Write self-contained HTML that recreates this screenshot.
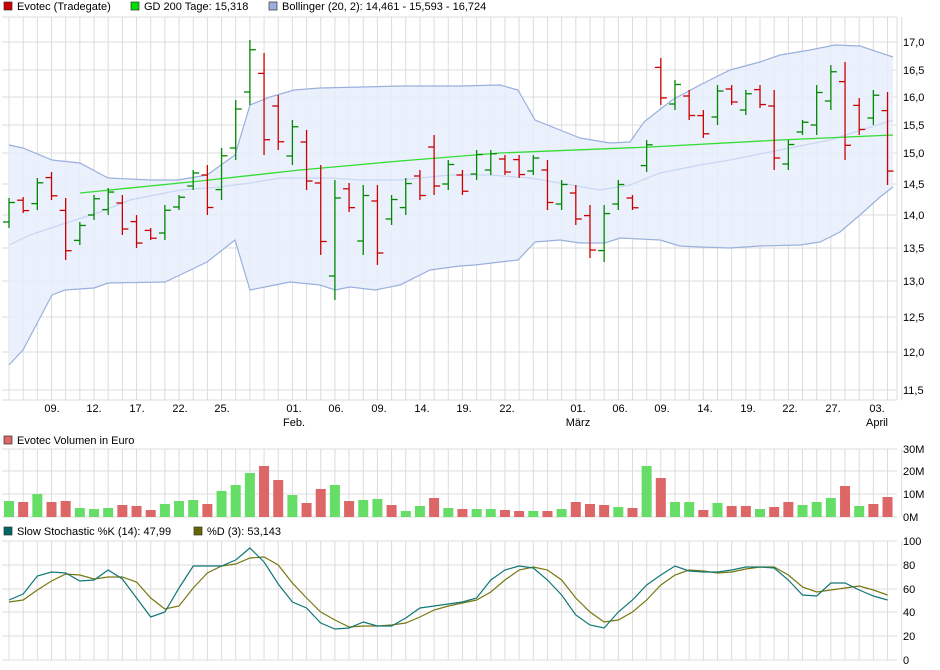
<!DOCTYPE html>
<html><head><meta charset="utf-8">
<style>
body{margin:0;background:#fff;width:940px;height:670px;overflow:hidden;font-family:"Liberation Sans",sans-serif;}
svg{position:absolute;left:0;top:0}
text{font-family:"Liberation Sans",sans-serif;font-size:11px;fill:#000}
</style></head><body>
<svg id="s" width="940" height="670" xmlns="http://www.w3.org/2000/svg"></svg>
<script>
const S=document.getElementById('s');let h='';
const X=i=>9+i*14.17;
const gridX=[];for(let i=0;i<64;i++)gridX.push(X(i));
function vgrid(t,b){gridX.forEach(x=>h+=`<line x1="${x}" y1="${t}" x2="${x}" y2="${b}" stroke="#dcdcdc"/>`);}
function hgrid(ys){ys.forEach(y=>h+=`<line x1="2" y1="${y}" x2="897" y2="${y}" stroke="#dcdcdc"/>`);}
function pl(pts,c,w){h+=`<polyline fill="none" stroke="${c}" stroke-width="${w}" points="${pts.map(p=>p.join(',')).join(' ')}"/>`;}
function legend(x,y,c,t){h+=`<rect x="${x}" y="${y-8}" width="8" height="8" fill="${c}" stroke="#333" stroke-width="0.7"/><text x="${x+13}" y="${y}">${t}</text>`;}
// legends
legend(4,10,'#cc0000','Evotec (Tradegate)');legend(131,10,'#00dd00','GD 200 Tage: 15,318');legend(269,10,'#9ab0dd','Bollinger (20, 2): 14,461 - 15,593 - 16,724');
legend(4,444,'#dd6666','Evotec Volumen in Euro');
legend(4,535,'#006666','Slow Stochastic %K (14): 47,99');legend(194,535,'#666600','%D (3): 53,143');
// main panel
const my=[42,70,97,125,153,184,215,248,281,317,352,390];
vgrid(17,400);hgrid(my);
h+=`<line x1="2" y1="17" x2="897" y2="17" stroke="#dcdcdc"/><line x1="2" y1="400" x2="897" y2="400" stroke="#dcdcdc"/><line x1="897" y1="17" x2="897" y2="400" stroke="#dcdcdc"/>`;
const up=[[9,145],[23,148],[52,160],[80,163],[108,178],[150,180],[178,180],[207,175],[235,155],[250,105],[270,97],[294,90],[320,88],[362,87],[400,86],[460,86],[500,85],[518,90],[535,120],[560,130],[580,138],[610,143],[630,142],[644,122],[672,100],[700,85],[730,70],[760,62],[780,55],[810,50],[835,45],[860,46],[893,57]];
const lo=[[9,365],[23,350],[52,295],[65,290],[94,288],[108,283],[165,282],[180,275],[207,262],[235,240],[250,290],[265,287],[290,282],[320,285],[335,290],[350,287],[375,290],[400,285],[430,270],[460,266],[475,265],[500,262],[518,260],[535,242],[560,240],[580,243],[605,243],[620,238],[660,240],[680,246],[700,247],[730,248],[760,246],[800,245],[820,242],[840,232],[860,215],[880,197],[893,187]];
h+=`<polygon fill="#e6eefc" fill-opacity="0.85" points="${up.concat(lo.slice().reverse()).map(p=>p.join(',')).join(' ')}"/>`;
pl(up,'#9ab0dd',1.2);pl(lo,'#9ab0dd',1.2);
pl([[9,245],[30,235],[60,225],[100,212],[130,200],[180,190],[220,187],[250,183],[280,178],[330,178],[360,180],[400,180],[450,175],[490,175],[530,178],[560,183],[600,190],[630,185],[660,173],[700,165],[730,160],[780,150],[830,140],[893,120]],'#c8d6f4',1.2);
pl([[80,193],[200,181],[300,170],[400,161],[500,153],[650,147],[780,140],[893,135]],'#33dd33',1.3);
// OHLC bars: [hi,lo,g]
const B=[[198,228,1],[197,213,0],[178,210,1],[172,200,0],[198,260,0],[222,245,1],[195,220,1],[188,215,1],[195,235,0],[215,248,0],[228,240,0],[205,240,1],[195,210,1],[170,190,1],[165,215,0],[148,200,1],[100,160,1],[40,105,1],[53,155,0],[95,150,0],[120,165,1],[130,190,0],[165,255,0],[180,300,1],[183,212,0],[185,255,1],[185,265,0],[195,225,1],[178,215,1],[170,200,0],[135,195,0],[160,190,1],[170,195,0],[150,180,1],[150,175,1],[155,175,0],[155,178,0],[155,175,1],[160,210,0],[180,210,1],[185,225,0],[205,258,0],[205,262,1],[180,210,1],[195,210,0],[140,172,1],[58,105,0],[80,110,1],[90,120,0],[110,138,0],[85,125,1],[85,105,0],[90,115,1],[85,108,0],[90,170,0],[140,170,1],[120,135,1],[85,135,1],[65,110,1],[62,160,0],[98,135,0],[90,125,1],[92,185,0]];
B.forEach((b,i)=>{const x=X(i),c=b[2]?'#008800':'#cc0000';const o=b[2]?b[1]-(b[1]-b[0])*0.2:b[0]+(b[1]-b[0])*0.2,cl=b[2]?b[0]+(b[1]-b[0])*0.15:b[1]-(b[1]-b[0])*0.15;
h+=`<line x1="${x}" y1="${b[0]}" x2="${x}" y2="${b[1]}" stroke="${c}" stroke-width="1.3"/><line x1="${x-6}" y1="${o}" x2="${x}" y2="${o}" stroke="${c}" stroke-width="1.3"/><line x1="${x}" y1="${cl}" x2="${x+6}" y2="${cl}" stroke="${c}" stroke-width="1.3"/>`;});
const ml=['17,0','16,5','16,0','15,5','15,0','14,5','14,0','13,5','13,0','12,5','12,0','11,5'];
ml.forEach((t,k)=>h+=`<text x="903" y="${my[k]+4}">${t}</text>`);
const xl=[[52,'09.'],[94,'12.'],[137,'17.'],[180,'22.'],[222,'25.'],[294,'01.'],[336,'06.'],[379,'09.'],[422,'14.'],[464,'19.'],[507,'22.'],[578,'01.'],[620,'06.'],[662,'09.'],[705,'14.'],[748,'19.'],[790,'22.'],[833,'27.'],[877,'03.']];
xl.forEach(a=>h+=`<text x="${a[0]}" y="412" text-anchor="middle">${a[1]}</text>`);
[[294,'Feb.'],[578,'März'],[877,'April']].forEach(a=>h+=`<text x="${a[0]}" y="426" text-anchor="middle">${a[1]}</text>`);
// volume
vgrid(449,517);hgrid([449,471,494,517]);
const V=[[501,1],[502,0],[494,1],[502,0],[501,0],[508,1],[509,1],[508,1],[505,0],[506,0],[510,0],[504,1],[501,1],[500,1],[504,0],[491,1],[485,1],[473,1],[466,0],[480,0],[495,1],[503,0],[489,0],[485,1],[501,0],[500,1],[499,1],[505,0],[511,1],[506,1],[498,0],[508,1],[509,0],[509,1],[509,1],[510,0],[511,0],[511,1],[511,0],[509,1],[502,0],[504,0],[505,0],[507,1],[508,0],[466,1],[478,0],[502,1],[502,1],[510,0],[503,1],[506,0],[506,0],[509,1],[507,0],[502,0],[505,1],[502,1],[498,1],[486,0],[506,1],[504,0],[497,0]];
V.forEach((v,i)=>{const x=X(i);h+=`<rect x="${x-5}" y="${v[0]}" width="10" height="${517-v[0]}" fill="${v[1]?'#66dd66':'#dd6666'}"/>`;});
[['30M',449],['20M',471],['10M',494],['0M',517]].forEach(a=>h+=`<text x="903" y="${a[1]+4}">${a[0]}</text>`);
// stochastic
vgrid(541,660);hgrid([541,565,589,612,636,660]);
const K=[600,594,576,572,573,581,580,570,579,598,617,612,588,566,566,566,560,548,562,584,602,608,623,629,628,622,626,626,618,608,606,604,602,598,580,570,566,568,580,595,615,625,628,612,600,585,575,566,571,572,572,570,567,567,568,580,595,596,583,583,590,596,600,603];
const D=[602,600,590,581,574,575,579,577,577,582,598,609,606,588,573,566,564,558,557,565,583,598,612,620,627,626,626,625,623,617,610,606,603,600,592,580,570,567,570,580,598,612,622,620,612,600,585,575,570,571,573,572,569,567,567,575,587,592,590,588,586,590,595,598];
pl(D.map((y,i)=>[X(i),y]).slice(0,63),'#777711',1.2);pl(K.map((y,i)=>[X(i),y]).slice(0,63),'#117777',1.2);
[['100',541],['80',565],['60',589],['40',612],['20',636],['0',660]].forEach(a=>h+=`<text x="903" y="${a[1]+4}">${a[0]}</text>`);
S.innerHTML=h;
</script>
</body></html>
